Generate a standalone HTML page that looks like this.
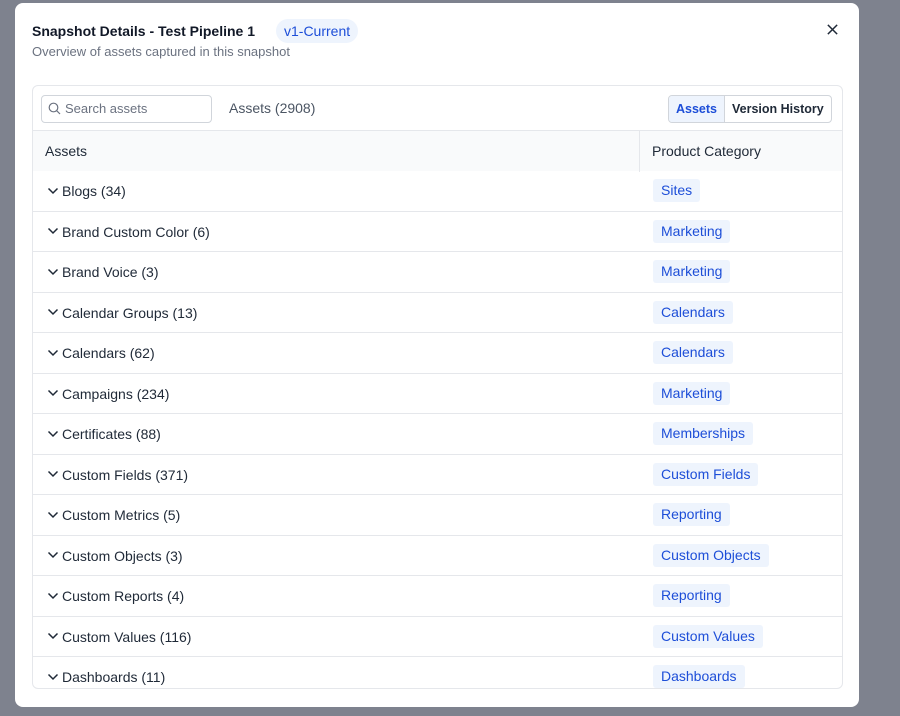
<!DOCTYPE html>
<html><head><style>
*{box-sizing:border-box;margin:0;padding:0}
body{width:900px;height:716px;background:#7e828e;font-family:"Liberation Sans",sans-serif;position:relative;overflow:hidden}
.modal{position:absolute;left:15px;top:3px;width:844px;height:704px;background:#fff;border-radius:8px}
.title{position:absolute;left:17px;top:20px;font-size:14px;font-weight:bold;color:#111827}
.badge{position:absolute;left:261px;top:16px;height:24px;padding:0 8px;border-radius:12px;background:#eef4fd;color:#1d4ed8;font-size:14px;line-height:24px}
.sub{position:absolute;left:17px;top:41px;font-size:13px;color:#6b7280}
.close{position:absolute;left:811px;top:20px}
.card{position:absolute;left:17px;top:82px;width:811px;height:604px;border:1px solid #e5e7eb;border-radius:6px;overflow:hidden}
.search{position:absolute;left:8px;top:9px;width:171px;height:28px;border:1px solid #d1d5db;border-radius:4px;font-size:13px;color:#6b7280;line-height:26px;padding-left:23px}
.search svg{position:absolute;left:6px;top:6px}
.cnt{position:absolute;left:196px;top:14px;font-size:14px;color:#4b5563}
.seg{position:absolute;left:635px;top:9px;height:28px;border:1px solid #d1d5db;border-radius:4px;display:flex;font-size:12.5px;font-weight:bold;overflow:hidden}
.seg div{padding:0 7px;line-height:26px;color:#1f2937}
.seg .a{background:#eef4fd;color:#1d4ed8;border-right:1px solid #d1d5db}
.head{position:absolute;left:0;top:44px;width:811px;height:41px;background:#f9fafb;border-top:1px solid #e5e7eb;font-size:14px;color:#1f2937}
.head .c1{position:absolute;left:12px;top:12px}
.head .c2{position:absolute;left:606px;top:0;height:41px;border-left:1px solid #e5e7eb;padding:12px 12px}
.rows{position:absolute;left:0;top:85px;width:811px}
.r{height:40.5px;border-bottom:1px solid #e5e7eb;position:relative;font-size:14px;color:#1f2937}
.r .n{position:absolute;left:14px;top:12px}
.r .n svg{vertical-align:middle;margin-right:3px;margin-top:-3px}
.r .t{position:absolute;left:620px;top:8px;height:23px;line-height:23px;padding:0 8px;background:#eef4fd;color:#1d4ed8;border-radius:3px}
</style></head><body>
<div class="modal">
<div class="title">Snapshot Details - Test Pipeline 1</div>
<div class="badge">v1-Current</div>
<div class="sub">Overview of assets captured in this snapshot</div>
<svg class="close" width="13" height="13" viewBox="0 0 14 14"><path d="M2 2L12 12M12 2L2 12" stroke="#1f2937" stroke-width="1.6"/></svg>
<div class="card">
<div class="search"><svg width="13" height="13" viewBox="0 0 13 13"><circle cx="5.5" cy="5.5" r="4.3" fill="none" stroke="#6b7280" stroke-width="1.2"/><path d="M8.7 8.7L12 12" stroke="#6b7280" stroke-width="1.2"/></svg>Search assets</div>
<div class="cnt">Assets (2908)</div>
<div class="seg"><div class="a">Assets</div><div>Version History</div></div>
<div class="head"><div class="c1">Assets</div><div class="c2">Product Category</div></div>
<div class="rows">
<div class="r"><span class="n"><svg width="12" height="8" viewBox="0 0 12 8"><path d="M1.5 1.5L6 6L10.5 1.5" fill="none" stroke="#1f2937" stroke-width="1.5"/></svg>Blogs (34)</span><span class="t">Sites</span></div>
<div class="r"><span class="n"><svg width="12" height="8" viewBox="0 0 12 8"><path d="M1.5 1.5L6 6L10.5 1.5" fill="none" stroke="#1f2937" stroke-width="1.5"/></svg>Brand Custom Color (6)</span><span class="t">Marketing</span></div>
<div class="r"><span class="n"><svg width="12" height="8" viewBox="0 0 12 8"><path d="M1.5 1.5L6 6L10.5 1.5" fill="none" stroke="#1f2937" stroke-width="1.5"/></svg>Brand Voice (3)</span><span class="t">Marketing</span></div>
<div class="r"><span class="n"><svg width="12" height="8" viewBox="0 0 12 8"><path d="M1.5 1.5L6 6L10.5 1.5" fill="none" stroke="#1f2937" stroke-width="1.5"/></svg>Calendar Groups (13)</span><span class="t">Calendars</span></div>
<div class="r"><span class="n"><svg width="12" height="8" viewBox="0 0 12 8"><path d="M1.5 1.5L6 6L10.5 1.5" fill="none" stroke="#1f2937" stroke-width="1.5"/></svg>Calendars (62)</span><span class="t">Calendars</span></div>
<div class="r"><span class="n"><svg width="12" height="8" viewBox="0 0 12 8"><path d="M1.5 1.5L6 6L10.5 1.5" fill="none" stroke="#1f2937" stroke-width="1.5"/></svg>Campaigns (234)</span><span class="t">Marketing</span></div>
<div class="r"><span class="n"><svg width="12" height="8" viewBox="0 0 12 8"><path d="M1.5 1.5L6 6L10.5 1.5" fill="none" stroke="#1f2937" stroke-width="1.5"/></svg>Certificates (88)</span><span class="t">Memberships</span></div>
<div class="r"><span class="n"><svg width="12" height="8" viewBox="0 0 12 8"><path d="M1.5 1.5L6 6L10.5 1.5" fill="none" stroke="#1f2937" stroke-width="1.5"/></svg>Custom Fields (371)</span><span class="t">Custom Fields</span></div>
<div class="r"><span class="n"><svg width="12" height="8" viewBox="0 0 12 8"><path d="M1.5 1.5L6 6L10.5 1.5" fill="none" stroke="#1f2937" stroke-width="1.5"/></svg>Custom Metrics (5)</span><span class="t">Reporting</span></div>
<div class="r"><span class="n"><svg width="12" height="8" viewBox="0 0 12 8"><path d="M1.5 1.5L6 6L10.5 1.5" fill="none" stroke="#1f2937" stroke-width="1.5"/></svg>Custom Objects (3)</span><span class="t">Custom Objects</span></div>
<div class="r"><span class="n"><svg width="12" height="8" viewBox="0 0 12 8"><path d="M1.5 1.5L6 6L10.5 1.5" fill="none" stroke="#1f2937" stroke-width="1.5"/></svg>Custom Reports (4)</span><span class="t">Reporting</span></div>
<div class="r"><span class="n"><svg width="12" height="8" viewBox="0 0 12 8"><path d="M1.5 1.5L6 6L10.5 1.5" fill="none" stroke="#1f2937" stroke-width="1.5"/></svg>Custom Values (116)</span><span class="t">Custom Values</span></div>
<div class="r"><span class="n"><svg width="12" height="8" viewBox="0 0 12 8"><path d="M1.5 1.5L6 6L10.5 1.5" fill="none" stroke="#1f2937" stroke-width="1.5"/></svg>Dashboards (11)</span><span class="t">Dashboards</span></div>
</div>
</div>
</div>
</body></html>
